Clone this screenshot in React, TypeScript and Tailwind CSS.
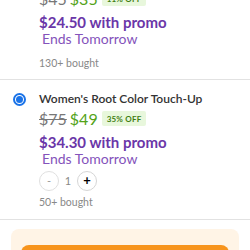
import React from 'react';

const Radio = () => (
    <div className="w-[13px] h-[13px] rounded-full border-2 border-[#1a73e8] flex items-center justify-center">
        <div className="w-[7px] h-[7px] rounded-full bg-[#1a73e8]" />
    </div>
);

const PriceRow = ({ was, now, off }: { was: string; now: string; off: string }) => (
    <div className="flex items-center h-[15px] gap-[3px]">
        <span className="text-[16px] leading-[15px] text-[#777] line-through">{was}</span>
        <span className="text-[16px] leading-[15px] text-[#53a318]">{now}</span>
        <span className="ml-[1px] px-[5px] h-[15px] flex items-center bg-[#e8f7dc] text-[#3f7d12] text-[8px] font-bold tracking-wide rounded-[2px]">{off}</span>
    </div>
);

const Promo = ({ price }: { price: string }) => (
    <>
        <p className="mt-[7px] text-[15px] leading-[18px] font-bold text-[#6a36a8]">{price} with promo</p>
        <p className="ml-[3px] text-[14px] leading-[16px] text-[#8453bb]">Ends Tomorrow</p>
    </>
);

export default function App() {
    return (
        <div className="w-[250px] h-[250px] overflow-hidden bg-white" style={{ fontFamily: 'Lato, "Noto Sans", sans-serif' }}>
            {/* partially scrolled option */}
            <div className="-mt-[9px] pl-[39px] pb-[9px] border-b border-[#e2e2e2]">
                <PriceRow was="$45" now="$35" off="11% OFF" />
                <Promo price="$24.50" />
                <p className="mt-[9px] text-[10.5px] leading-[14px] text-[#888]">130+ bought</p>
            </div>

            {/* selected option */}
            <div className="flex pt-[10px] pb-[10px] border-b border-[#e2e2e2]">
                <div className="w-[39px] pl-[13px] pt-[3px]">
                    <Radio />
                </div>
                <div className="flex-1">
                    <p className="text-[12px] leading-[18px] font-semibold text-[#333]">Women's Root Color Touch-Up</p>
                    <div className="mt-[3px]">
                        <PriceRow was="$75" now="$49" off="35% OFF" />
                    </div>
                    <Promo price="$34.30" />
                    <div className="mt-[4px] flex items-center gap-[4px]">
                        <button className="w-[20px] h-[20px] rounded-full border border-[#e0e0e0] flex items-center justify-center text-[11px] text-[#999]">-</button>
                        <span className="w-[10px] text-center text-[11px] text-[#888]">1</span>
                        <button className="w-[20px] h-[20px] rounded-full border border-[#d6d6d6] flex items-center justify-center text-[13px] font-bold text-black">+</button>
                    </div>
                    <p className="mt-[4px] text-[10.5px] leading-[14px] text-[#888]">50+ bought</p>
                </div>
            </div>

            {/* checkout bar */}
            <div className="mx-[11px] mt-[9px] rounded-[8px] bg-[#fff4e6] px-[10px] pt-[16px] pb-[12px]">
                <button className="w-full h-[40px] rounded-[8px] bg-[#f7941d] text-white font-bold text-[15px]">Buy now</button>
            </div>
        </div>
    );
}
